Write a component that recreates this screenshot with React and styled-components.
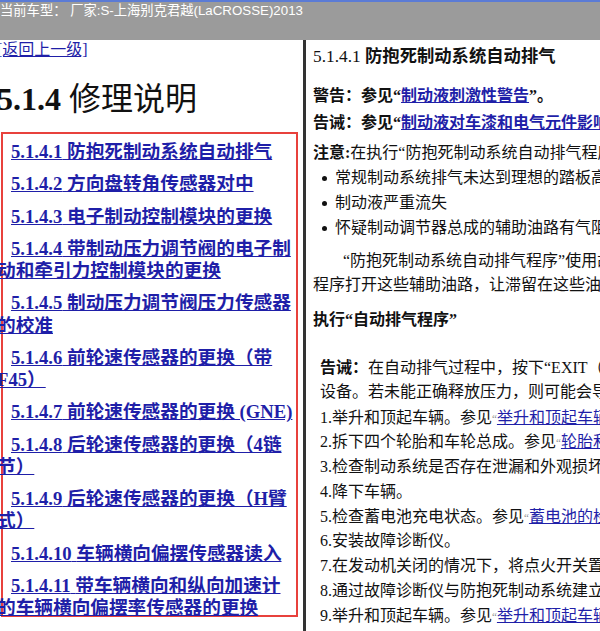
import React from 'react'
import styled, { createGlobalStyle } from 'styled-components'

const GlobalStyle = createGlobalStyle`
  html, body {
    margin: 0;
    padding: 0;
    background: #fff;
    overflow: hidden;
  }
  body {
    font-family: "Liberation Serif", "Noto Sans CJK SC", serif;
  }
`

const SERIF = `"Liberation Serif", "Noto Sans CJK SC", serif`
const LINK = '#1f1fa8'

const tocItems = [
    { num: '5.1.4.1', title: '防抱死制动系统自动排气' },
    { num: '5.1.4.2', title: '方向盘转角传感器对中' },
    { num: '5.1.4.3', title: '电子制动控制模块的更换' },
    { num: '5.1.4.4', title: '带制动压力调节阀的电子制动和牵引力控制模块的更换' },
    { num: '5.1.4.5', title: '制动压力调节阀压力传感器的校准' },
    { num: '5.1.4.6', title: '前轮速传感器的更换（带F45）' },
    { num: '5.1.4.7', title: '前轮速传感器的更换 (GNE)' },
    { num: '5.1.4.8', title: '后轮速传感器的更换（4链节）' },
    { num: '5.1.4.9', title: '后轮速传感器的更换（H臂式）' },
    { num: '5.1.4.10', title: '车辆横向偏摆传感器读入' },
    { num: '5.1.4.11', title: '带车辆横向和纵向加速计的车辆横向偏摆率传感器的更换' },
]

const steps = [
    { text: '举升和顶起车辆。参见', ref: '举升和顶起车辆', tail: '。' },
    { text: '拆下四个轮胎和车轮总成。参见', ref: '轮胎和车轮的拆卸与安装', tail: '。' },
    { text: '检查制动系统是否存在泄漏和外观损坏。' },
    { text: '降下车辆。' },
    { text: '检查蓄电池充电状态。参见', ref: '蓄电池的检查/测试', tail: '。' },
    { text: '安装故障诊断仪。' },
    { text: '在发动机关闭的情况下，将点火开关置于“ON”位置。' },
    { text: '通过故障诊断仪与防抱死制动系统建立通信。' },
    { text: '举升和顶起车辆。参见', ref: '举升和顶起车辆', tail: '。' },
]

const bullets = [
    '常规制动系统排气未达到理想的踏板高度或感觉',
    '制动液严重流失',
    '怀疑制动调节器总成的辅助油路有气阻',
]

function App() {
    return (
        <>
            <GlobalStyle />
            <Page>
                <TopBar>当前车型： 厂家:S-上海别克君越(LaCROSSE)2013</TopBar>
                <Panes>
                    <LeftPane>
                        <LeftInner>
                            <BackLink href="#">[返回上一级]</BackLink>
                            <PageTitle>
                                <b>5.1.4</b> 修理说明
                            </PageTitle>
                            <TocBox>
                                {tocItems.map(item => (
                                    <TocItem key={item.num}>
                                        <TocLink href="#">
                                            {item.num} {item.title}
                                        </TocLink>
                                    </TocItem>
                                ))}
                            </TocBox>
                        </LeftInner>
                    </LeftPane>
                    <Divider />
                    <RightPane>
                        <SectionTitle>
                            5.1.4.1 <b>防抱死制动系统自动排气</b>
                        </SectionTitle>
                        <WarnBlock>
                            <Line>
                                警告：参见“<StrongLink href="#">制动液刺激性警告</StrongLink>”。
                            </Line>
                            <Line>
                                告诫：参见“<StrongLink href="#">制动液对车漆和电气元件影响的告诫</StrongLink>”。
                            </Line>
                        </WarnBlock>
                        <Note>
                            <b>注意:</b>在执行“防抱死制动系统自动排气程序”之前，应确认以下情况之一：
                        </Note>
                        <BulletList>
                            {bullets.map(b => (
                                <li key={b}>{b}</li>
                            ))}
                        </BulletList>
                        <Para>
                            “防抱死制动系统自动排气程序”使用故障诊断仪循环电磁阀并运行泵电机，该
                            <br />
                            程序打开这些辅助油路，让滞留在这些油路中的空气排出到主制动油路中。
                        </Para>
                        <SubHeading>执行“自动排气程序”</SubHeading>
                        <Caution>
                            <b>告诫：</b>在自动排气过程中，按下“EXIT（退出）”按钮将中断该程序，并可能损坏
                            <br />
                            设备。若未能正确释放压力，则可能会导致制动系统部件损坏。
                        </Caution>
                        <StepList>
                            {steps.map((s, i) => (
                                <li key={i}>
                                    {i + 1}.{s.text}
                                    {s.ref && (
                                        <>
                                            <Quote>“</Quote>
                                            <BodyLink href="#">{s.ref}</BodyLink>”{s.tail}
                                        </>
                                    )}
                                </li>
                            ))}
                        </StepList>
                    </RightPane>
                </Panes>
            </Page>
        </>
    )
}

const Page = styled.div`
  height: 100vh;
  display: flex;
  flex-direction: column;
`

const TopBar = styled.div`
  height: 40px;
  box-sizing: border-box;
  border-top: 2px solid #5b7bd5;
  background: #9b9b9b;
  color: #fff;
  font-family: "Liberation Sans", "Noto Sans CJK SC", sans-serif;
  font-size: 13.3px;
  line-height: 16px;
  padding-top: 1px;
  white-space: nowrap;
`

const Panes = styled.div`
  flex: 1;
  display: flex;
  overflow: hidden;
`

const LeftPane = styled.div`
  width: 303px;
  flex: none;
  overflow: hidden;
`

const LeftInner = styled.div`
  margin-left: -3px;
`

const BackLink = styled.a`
  display: inline-block;
  font-family: ${SERIF};
  font-size: 16px;
  line-height: 20px;
  color: ${LINK};
`

const PageTitle = styled.h1`
  margin: 21px 0 0;
  font-family: ${SERIF};
  font-size: 32px;
  line-height: 36px;
  font-weight: normal;
  color: #111;
  white-space: nowrap;
  b {
    font-weight: bold;
  }
`

const TocBox = styled.div`
  margin: 15px 0 0 4px;
  width: 297px;
  height: 485px;
  box-sizing: border-box;
  border: 2px solid #e8413c;
  padding: 7px 0 0;
`

const TocItem = styled.div`
  margin: 0 -1px 10.1px -6px;
  text-indent: 14px;
  font-family: ${SERIF};
  font-size: 18.67px;
  line-height: 22.2px;
  font-weight: bold;
`

const TocLink = styled.a`
  color: ${LINK};
`

const Divider = styled.div`
  width: 3px;
  flex: none;
  background: #333;
`

const RightPane = styled.div`
  flex: 1;
  overflow: hidden;
  padding: 6px 0 0 7px;
  font-family: ${SERIF};
  font-size: 16px;
  color: #111;
  white-space: nowrap;
`

const SectionTitle = styled.div`
  font-size: 17.33px;
  line-height: 22px;
  b {
    font-weight: bold;
  }
`

const WarnBlock = styled.div`
  margin-top: 13.5px;
  font-weight: bold;
`

const Line = styled.div`
  line-height: 27px;
`

const StrongLink = styled.a`
  color: ${LINK};
`

const Note = styled.div`
  margin-top: 5.5px;
  line-height: 24px;
  b {
    font-weight: bold;
  }
`

const BulletList = styled.ul`
  margin: 0;
  padding: 0 0 0 22px;
  list-style: none;
  li {
    position: relative;
    line-height: 25px;
  }
  li::before {
    content: '';
    position: absolute;
    left: -13px;
    top: 11px;
    width: 5px;
    height: 5px;
    border-radius: 50%;
    background: #111;
  }
`

const Para = styled.div`
  margin-top: 9px;
  line-height: 24px;
  text-indent: 30px;
`

const SubHeading = styled.div`
  margin-top: 11px;
  line-height: 24px;
  font-weight: bold;
`

const Caution = styled.div`
  margin: 24px 0 0 7px;
  line-height: 24px;
  b {
    font-weight: bold;
  }
`

const StepList = styled.ol`
  margin: 1.5px 0 0 7px;
  padding: 0;
  list-style: none;
  li {
    line-height: 24.75px;
  }
`

const Quote = styled.span`
  color: #888;
  font-size: 11px;
  vertical-align: top;
`

const BodyLink = styled.a`
  color: ${LINK};
`

export default App
